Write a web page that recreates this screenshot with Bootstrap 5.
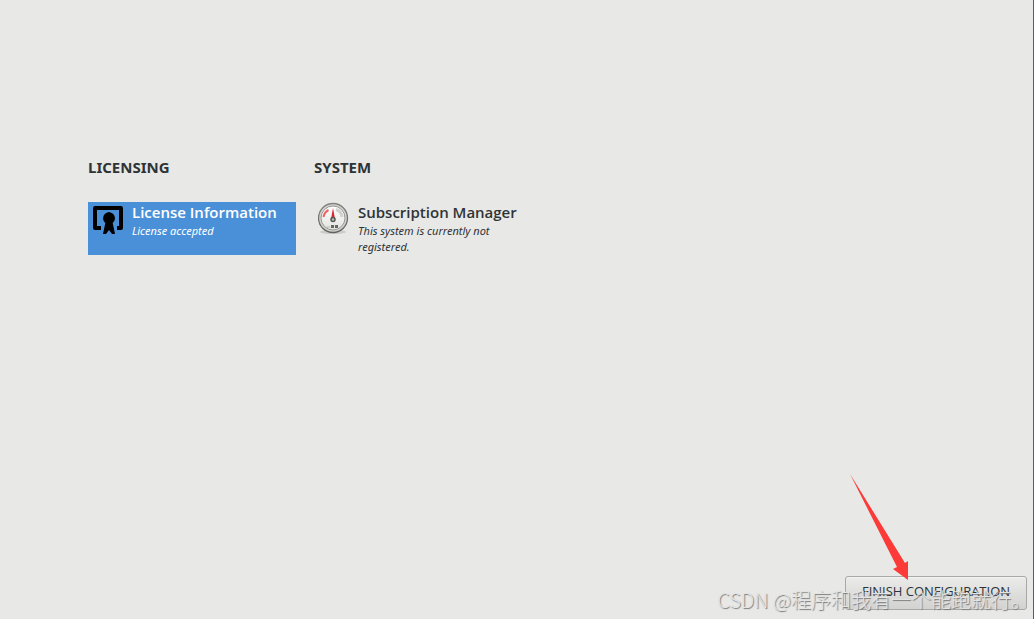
<!DOCTYPE html>
<html lang="en">
<head>
<meta charset="utf-8">
<meta name="viewport" content="width=device-width, initial-scale=1">
<title>Initial Setup</title>
<link href="https://cdn.jsdelivr.net/npm/bootstrap@5.3.0/dist/css/bootstrap.min.css" rel="stylesheet">
<style>
  body { background: #e8e8e6; color: #2e3436; font-family: "Noto Sans", "Open Sans", sans-serif; }
  .hub { border-right: 1px solid #5c5c5c; }
  .hub-main { padding: 155px 88px 0; }
  .spokes { gap: 18px; }
  .spoke-group { width: 208px; }
  .group-title { font-size: 15px; line-height: 24px; font-weight: 700; margin-bottom: 23px; }
  .spoke { color: inherit; height: 53px; padding-left: 4px; gap: 8px; }
  .spoke.selected { background: #4a90d9; color: #fff; }
  .spoke-icon { width: 32px; height: 34px; }
  .spoke-name { font-family: "Open Sans", "Noto Sans", sans-serif; font-size: 15px; line-height: 21px; font-weight: 600; white-space: nowrap; }
  .spoke-status { font-size: 11px; line-height: 16px; font-style: italic; }
  .hub-footer { padding: 0 6px 9px; }
  .btn-finish { width: 182px; height: 34px; padding: 0 0 2px; font-family: "Open Sans", "Noto Sans", sans-serif; font-size: 13px; color: #2e3436; border: 1px solid #a8a8a6; border-radius: 3px; background: linear-gradient(#ebebea, #d2d2d0); box-shadow: inset 0 1px #f4f4f3; }
  .pointer-arrow { width: 60px; height: 108px; right: 124px; bottom: 38px; }
  .watermark { right: 2px; bottom: 4px; font: 300 20px/30px "Noto Sans CJK SC", sans-serif; color: #e4e4e4; text-shadow: 1px 1px 1px #777; white-space: nowrap; pointer-events: none; }
</style>
</head>
<body>
<div class="hub position-relative min-vh-100 d-flex flex-column">
  <main class="hub-main flex-grow-1">
    <div class="spokes d-flex">
      <section class="spoke-group">
        <h2 class="group-title">LICENSING</h2>
        <a href="#license" class="spoke selected d-flex text-decoration-none">
          <svg class="spoke-icon flex-shrink-0" viewBox="0 0 32 34" aria-hidden="true">
            <path d="M9 26H3V6H29V26H25" fill="none" stroke="#000" stroke-width="4" stroke-linejoin="round"/>
            <path d="M17 10l2.300 .7 2 1.300 1.200 2 .5 2.500-.7 2.400-1.600 2.100L23 32h-3l-3-4-3 4h-3l2.300-11-1.600-2.100-.7-2.400.5-2.500 1.200-2 2-1.300z" fill="#000"/>
          </svg>
          <span>
            <span class="spoke-name d-block">License Information</span>
            <span class="spoke-status d-block">License accepted</span>
          </span>
        </a>
      </section>
      <section class="spoke-group">
        <h2 class="group-title">SYSTEM</h2>
        <a href="#subscription" class="spoke d-flex text-decoration-none">
          <svg class="spoke-icon flex-shrink-0" viewBox="0 0 32 34" aria-hidden="true">
            <defs>
              <linearGradient id="rim" x2="0" y2="1"><stop offset="0" stop-color="#85857f"/><stop offset="1" stop-color="#61615d"/></linearGradient>
              <linearGradient id="dial" x2="0" y2="1"><stop offset="0" stop-color="#fff"/><stop offset="1" stop-color="#e2e2df"/></linearGradient>
            </defs>
            <ellipse cx="15" cy="30" rx="13" ry="2" fill="#000" opacity=".12"/>
            <circle cx="15" cy="16" r="14.500" fill="#d0d1cc" stroke="url(#rim)" stroke-width="1.300"/>
            <circle cx="15" cy="16" r="12" fill="url(#dial)" stroke="#999b96"/>
            <path d="M5.500 15A9.500 9.500 0 0 1 10.500 8" fill="none" stroke="#f06060" stroke-width="2"/>
            <path d="M18 7.500A9 9 0 0 1 24 15" fill="none" stroke="#d0d2ce" stroke-width="3"/>
            <path d="M15 6l2 11h-4z" fill="#dc2530"/>
            <circle cx="15" cy="17.500" r="2" fill="#bbb" stroke="#555753" stroke-width="1.500"/>
            <path d="M9 25h3" stroke="#bbb" stroke-width="1"/>
            <path d="M13 24.500h3m1 0h3" stroke="#666" stroke-width="3"/>
          </svg>
          <span>
            <span class="spoke-name d-block">Subscription Manager</span>
            <span class="spoke-status d-block">This system is currently not registered.</span>
          </span>
        </a>
      </section>
    </div>
  </main>
  <footer class="hub-footer d-flex justify-content-end">
    <button type="button" class="btn btn-finish">FINISH CONFIGURATION</button>
  </footer>
  <svg class="pointer-arrow position-absolute" viewBox="0 0 60 108" aria-hidden="true">
    <path d="M1 1L56 90L59 88V107L44 96L48 94Z" fill="#fc3a38"/>
  </svg>
  <div class="watermark position-absolute">CSDN @程序和我有一个能跑就行。</div>
</div>
<script src="https://cdn.jsdelivr.net/npm/bootstrap@5.3.0/dist/js/bootstrap.bundle.min.js"></script>
</body>
</html>
